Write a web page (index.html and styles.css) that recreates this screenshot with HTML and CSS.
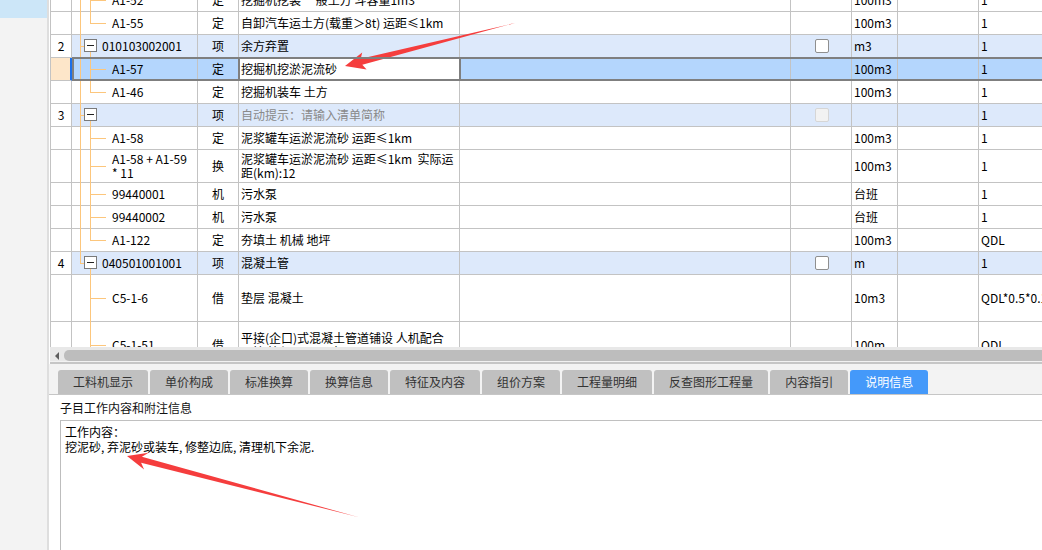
FILE: index.html
```html
<!DOCTYPE html>
<html lang="zh-CN">
<head>
<meta charset="utf-8">
<title>说明信息</title>
<link rel="stylesheet" href="styles.css">
</head>
<body>
<aside class="sidebar"><div class="side-sel"></div></aside>
<main class="main">
  <div class="grid">
    <div class="rows">
      <div class="row">
        <div class="c num"></div>
        <div class="c code"><span class="t-out"></span><span class="t-in"></span><span class="t-h"></span><span>A1-52</span></div>
        <div class="c type">定</div>
        <div class="c name">挖掘机挖装 一般土方 斗容量1m3</div>
        <div class="c"></div><div class="c chk"></div>
        <div class="c unit">100m3</div><div class="c"></div><div class="c qty">1</div>
      </div>
      <div class="row">
        <div class="c num"></div>
        <div class="c code"><span class="t-out"></span><span class="t-in half"></span><span class="t-h"></span><span>A1-55</span></div>
        <div class="c type">定</div>
        <div class="c name">自卸汽车运土方(载重＞8t) 运距≤1km</div>
        <div class="c"></div><div class="c chk"></div>
        <div class="c unit">100m3</div><div class="c"></div><div class="c qty">1</div>
      </div>
      <div class="row lvl1">
        <div class="c num">2</div>
        <div class="c code parent"><span class="t-out"></span><span class="t-stub"></span><span class="t-box"></span><span class="t-in below"></span><span>010103002001</span></div>
        <div class="c type">项</div>
        <div class="c name">余方弃置</div>
        <div class="c"></div><div class="c chk"><span class="checkbox"></span></div>
        <div class="c unit">m3</div><div class="c"></div><div class="c qty">1</div>
      </div>
      <div class="row sel">
        <div class="c num"></div>
        <div class="c code"><span class="t-out"></span><span class="t-in"></span><span class="t-h"></span><span>A1-57</span></div>
        <div class="c type">定</div>
        <div class="c name edit">挖掘机挖淤泥流砂</div>
        <div class="c"></div><div class="c chk"></div>
        <div class="c unit">100m3</div><div class="c"></div><div class="c qty">1</div>
      </div>
      <div class="row">
        <div class="c num"></div>
        <div class="c code"><span class="t-out"></span><span class="t-in half"></span><span class="t-h"></span><span>A1-46</span></div>
        <div class="c type">定</div>
        <div class="c name">挖掘机装车 土方</div>
        <div class="c"></div><div class="c chk"></div>
        <div class="c unit">100m3</div><div class="c"></div><div class="c qty">1</div>
      </div>
      <div class="row lvl1">
        <div class="c num">3</div>
        <div class="c code parent"><span class="t-out"></span><span class="t-stub"></span><span class="t-box"></span><span class="t-in below"></span></div>
        <div class="c type">项</div>
        <div class="c name hint">自动提示：请输入清单简称</div>
        <div class="c"></div><div class="c chk"><span class="checkbox off"></span></div>
        <div class="c unit"></div><div class="c"></div><div class="c qty">1</div>
      </div>
      <div class="row">
        <div class="c num"></div>
        <div class="c code"><span class="t-out"></span><span class="t-in"></span><span class="t-h"></span><span>A1-58</span></div>
        <div class="c type">定</div>
        <div class="c name">泥浆罐车运淤泥流砂 运距≤1km</div>
        <div class="c"></div><div class="c chk"></div>
        <div class="c unit">100m3</div><div class="c"></div><div class="c qty">1</div>
      </div>
      <div class="row h33">
        <div class="c num"></div>
        <div class="c code"><span class="t-out"></span><span class="t-in"></span><span class="t-h"></span><span class="two">A1-58 + A1-59<br>* 11</span></div>
        <div class="c type">换</div>
        <div class="c name"><span class="two">泥浆罐车运淤泥流砂 运距≤1km&nbsp; 实际运<br>距(km):12</span></div>
        <div class="c"></div><div class="c chk"></div>
        <div class="c unit">100m3</div><div class="c"></div><div class="c qty">1</div>
      </div>
      <div class="row">
        <div class="c num"></div>
        <div class="c code"><span class="t-out"></span><span class="t-in"></span><span class="t-h"></span><span>99440001</span></div>
        <div class="c type">机</div>
        <div class="c name">污水泵</div>
        <div class="c"></div><div class="c chk"></div>
        <div class="c unit">台班</div><div class="c"></div><div class="c qty">1</div>
      </div>
      <div class="row">
        <div class="c num"></div>
        <div class="c code"><span class="t-out"></span><span class="t-in"></span><span class="t-h"></span><span>99440002</span></div>
        <div class="c type">机</div>
        <div class="c name">污水泵</div>
        <div class="c"></div><div class="c chk"></div>
        <div class="c unit">台班</div><div class="c"></div><div class="c qty">1</div>
      </div>
      <div class="row">
        <div class="c num"></div>
        <div class="c code"><span class="t-out"></span><span class="t-in half"></span><span class="t-h"></span><span>A1-122</span></div>
        <div class="c type">定</div>
        <div class="c name">夯填土 机械 地坪</div>
        <div class="c"></div><div class="c chk"></div>
        <div class="c unit">100m3</div><div class="c"></div><div class="c qty">QDL</div>
      </div>
      <div class="row lvl1">
        <div class="c num">4</div>
        <div class="c code parent"><span class="t-out half"></span><span class="t-stub"></span><span class="t-box"></span><span class="t-in below"></span><span>040501001001</span></div>
        <div class="c type">项</div>
        <div class="c name">混凝土管</div>
        <div class="c"></div><div class="c chk"><span class="checkbox"></span></div>
        <div class="c unit">m</div><div class="c"></div><div class="c qty">1</div>
      </div>
      <div class="row h47">
        <div class="c num"></div>
        <div class="c code"><span class="t-in"></span><span class="t-h"></span><span>C5-1-6</span></div>
        <div class="c type">借</div>
        <div class="c name">垫层 混凝土</div>
        <div class="c"></div><div class="c chk"></div>
        <div class="c unit">10m3</div><div class="c"></div><div class="c qty">QDL*0.5*0.15</div>
      </div>
      <div class="row h47">
        <div class="c num"></div>
        <div class="c code"><span class="t-in"></span><span class="t-h"></span><span>C5-1-51</span></div>
        <div class="c type">借</div>
        <div class="c name"><span class="two">平接(企口)式混凝土管道铺设 人机配合<br>下管 管径(mm以内) 300</span></div>
        <div class="c"></div><div class="c chk"></div>
        <div class="c unit">100m</div><div class="c"></div><div class="c qty">QDL</div>
      </div>
    </div>
  </div>
  <div class="hscroll"><span class="hs-arrow"></span><span class="hs-thumb"></span></div>
  <nav class="tabbar">
    <span class="tab">工料机显示</span>
    <span class="tab">单价构成</span>
    <span class="tab">标准换算</span>
    <span class="tab">换算信息</span>
    <span class="tab">特征及内容</span>
    <span class="tab">组价方案</span>
    <span class="tab">工程量明细</span>
    <span class="tab">反查图形工程量</span>
    <span class="tab">内容指引</span>
    <span class="tab on">说明信息</span>
  </nav>
  <section class="panel">
    <div class="panel-title">子目工作内容和附注信息</div>
    <div class="memo">工作内容：<br>挖泥砂, 弃泥砂或装车, 修整边底, 清理机下余泥.</div>
  </section>
</main>
<svg class="arrows" width="1042" height="550" viewBox="0 0 1042 550">
  <polygon points="345,66 366.6,69.6 362.3,64.8 515,23 360.7,58.8 362.2,52.6" fill="#f53d3d"/>
  <polygon points="127,456 144.1,469.4 141.1,462.8 358,517 141.9,456.8 148.6,452.7" fill="#f53d3d"/>
</svg>
</body>
</html>
```
FILE: styles.css
```css
html, body {
  margin: 0;
  padding: 0;
}
body {
  position: relative;
  width: 1042px;
  height: 550px;
  overflow: hidden;
  display: flex;
  background: #ffffff;
  font-family: "Noto Sans CJK SC", "Liberation Sans", sans-serif;
  font-size: 12px;
  color: #000;
}
.sidebar {
  flex: none;
  width: 49px;
  box-sizing: border-box;
  background: #f3f3f3;
  border-right: 2px solid #dedede;
}
.side-sel {
  height: 18px;
  background: #cce6f8;
}
.main {
  flex: 1;
  min-width: 0;
  display: flex;
  flex-direction: column;
  background: #ffffff;
}
.grid {
  height: 347px;
  flex: none;
  overflow: hidden;
  margin-left: 1px;
  border-left: 1px solid #c3c3c3;
  background: #fff;
}
.rows {
  margin-top: -11px;
}
.row {
  display: grid;
  grid-template-columns: 21px 126px 41px 221px 331px 61px 46px 81px 120px;
  height: 23px;
}
.row.h33 { height: 33px; }
.row.h47 { height: 47px; }
.c {
  box-sizing: border-box;
  border-right: 1px solid #c3c3c3;
  border-bottom: 1px solid #c3c3c3;
  display: flex;
  align-items: center;
  white-space: nowrap;
  overflow: hidden;
  line-height: 14px;
}
.two { line-height: 14.5px; }
.num { justify-content: center; }
.type { justify-content: center; }
.name, .unit, .qty { padding-left: 2px; }
.chk { justify-content: center; padding-left: 1px; }
.hint { color: #8a8a8a; }
.code {
  position: relative;
  padding-left: 40px;
  overflow: visible;
}
.code.parent { padding-left: 30px; }

.lvl1 .c { background: #dde9fb; }
.lvl1 .c.num { background: #ffffff; }

.row.sel { position: relative; }
.row.sel .c { background: #b4d6fd; }
.row.sel .c.num {
  background: #fde6c9;
  border-right-color: #1c6fe8;
  box-shadow: inset -1px 0 #1c6fe8;
}
.row.sel .c.edit {
  background: #ffffff;
  position: relative;
  overflow: visible;
}
.row.sel .c.edit::before {
  content: "";
  position: absolute;
  left: -1px;
  top: -1px;
  width: 223px;
  height: 24px;
  box-sizing: border-box;
  border: 2px solid #7f7f7f;
  z-index: 2;
}
.row.sel::after {
  content: "";
  position: absolute;
  left: 21px;
  right: 0;
  top: -1px;
  height: 24px;
  box-sizing: border-box;
  border: 2px solid #7f7f7f;
  border-right: none;
  z-index: 1;
}

/* tree connectors */
.t-out, .t-in, .t-h, .t-stub {
  position: absolute;
  background: #fcc67c;
}
.t-out { left: 8px; width: 1px; top: 0; bottom: -1px; }
.t-out.half { bottom: 50%; }
.t-in { left: 18px; width: 1px; top: 0; bottom: -1px; }
.t-in.half { bottom: 50%; }
.t-in.below { top: calc(50% + 6px); }
.t-h { left: 18px; width: 16px; height: 1px; top: 50%; }
.t-stub { left: 8px; width: 4px; height: 1px; top: 50%; }
.t-box {
  position: absolute;
  left: 12px;
  top: calc(50% - 7px);
  width: 13px;
  height: 13px;
  box-sizing: border-box;
  border: 1px solid #7a7a7a;
  background: #ffffff;
}
.t-box::after {
  content: "";
  position: absolute;
  left: 2px;
  right: 2px;
  top: 5px;
  height: 1px;
  background: #222;
}

.checkbox {
  width: 14px;
  height: 14px;
  box-sizing: border-box;
  border: 1px solid #8f8f8f;
  border-radius: 2px;
  background: #ffffff;
}
.checkbox.off {
  border-color: #d6d6d6;
  background: #f2f2f2;
}

/* horizontal scrollbar */
.hscroll {
  flex: none;
  height: 14px;
  margin-left: 1px;
  padding-left: 5px;
  background: #e8e8e8;
  display: flex;
  align-items: flex-end;
  gap: 5px;
  border-bottom: 1px solid #f2f2f2;
  box-shadow: 0 2px 0 #c6c6c6;
  margin-bottom: 2px;
}
.hs-arrow {
  width: 0;
  height: 0;
  border-right: 4px solid #5e5e5e;
  border-top: 4px solid transparent;
  border-bottom: 4px solid transparent;
  margin-bottom: 1px;
}
.hs-thumb {
  flex: 1;
  height: 11px;
  background: #bdbdbd;
  border-radius: 5px 0 0 5px;
}

/* tabs */
.tabbar {
  flex: none;
  display: flex;
  gap: 2px;
  padding: 6px 0 0 9px;
  background: #f3f3f3;
  border-bottom: 1px solid #c6c6c6;
}
.tab {
  height: 24px;
  line-height: 24px;
  padding: 0 15px;
  background: #c0c0c0;
  color: #333333;
  border-radius: 3px 3px 0 0;
  font-size: 12px;
}
.tab.on {
  background: #4499fa;
  color: #ffffff;
}

/* bottom panel */
.panel {
  flex: 1;
  display: flex;
  flex-direction: column;
  padding: 4px 0 0 11px;
  background: #ffffff;
}
.panel-title {
  line-height: 17px;
  color: #111;
}
.memo {
  flex: 1;
  margin-top: 4px;
  padding: 3px 4px;
  border-top: 1px solid #c0c0c0;
  border-left: 1px solid #bdbdbd;
  line-height: 15px;
  color: #000;
}

.arrows {
  position: absolute;
  left: 0;
  top: 0;
  pointer-events: none;
}
```
